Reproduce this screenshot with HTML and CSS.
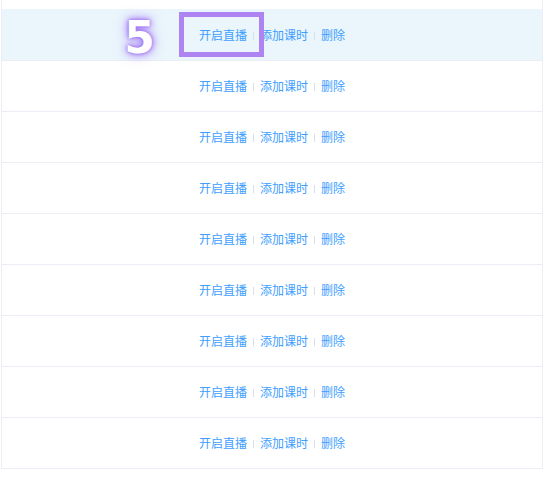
FILE: index.html
```html
<!DOCTYPE html>
<html lang="zh-CN">
<head>
<meta charset="utf-8">
<title>操作列表</title>
<link rel="stylesheet" href="styles.css">
</head>
<body>
<div class="table">
  <div class="row current">
    <div class="actions"><a class="link">开启直播</a><span class="divider"></span><a class="link">添加课时</a><span class="divider"></span><a class="link">删除</a></div>
  </div>
  <div class="row"><div class="actions"><a class="link">开启直播</a><span class="divider"></span><a class="link">添加课时</a><span class="divider"></span><a class="link">删除</a></div></div>
  <div class="row"><div class="actions"><a class="link">开启直播</a><span class="divider"></span><a class="link">添加课时</a><span class="divider"></span><a class="link">删除</a></div></div>
  <div class="row"><div class="actions"><a class="link">开启直播</a><span class="divider"></span><a class="link">添加课时</a><span class="divider"></span><a class="link">删除</a></div></div>
  <div class="row"><div class="actions"><a class="link">开启直播</a><span class="divider"></span><a class="link">添加课时</a><span class="divider"></span><a class="link">删除</a></div></div>
  <div class="row"><div class="actions"><a class="link">开启直播</a><span class="divider"></span><a class="link">添加课时</a><span class="divider"></span><a class="link">删除</a></div></div>
  <div class="row"><div class="actions"><a class="link">开启直播</a><span class="divider"></span><a class="link">添加课时</a><span class="divider"></span><a class="link">删除</a></div></div>
  <div class="row"><div class="actions"><a class="link">开启直播</a><span class="divider"></span><a class="link">添加课时</a><span class="divider"></span><a class="link">删除</a></div></div>
  <div class="row last"><div class="actions"><a class="link">开启直播</a><span class="divider"></span><a class="link">添加课时</a><span class="divider"></span><a class="link">删除</a></div></div>
</div>
<div class="step-number">5</div>
<div class="step-box"></div>
</body>
</html>
```
FILE: styles.css
```css
html, body {
  margin: 0;
  padding: 0;
  background: #ffffff;
}

body {
  font-family: "Noto Sans CJK SC", "Noto Sans", sans-serif;
  width: 543px;
  height: 479px;
  overflow: hidden;
  position: relative;
}

.table {
  margin-left: 1px;
  width: 542px;
  box-sizing: border-box;
  border-left: 1px solid #ebeef5;
  border-right: 1px solid #ebeef5;
  padding-top: 9px;
}

.row {
  height: 50px;
  border-top: 1px solid #ebeef5;
  display: flex;
  align-items: center;
  justify-content: center;
}

.row.current {
  background: #eaf5fc;
  border-top-color: #eaf5fc;
}

.row.last {
  border-bottom: 1px solid #ebeef5;
}

.actions {
  display: flex;
  align-items: center;
  font-size: 12px;
  line-height: 16px;
}

.link {
  color: #409eff;
  cursor: pointer;
  text-decoration: none;
}

.divider {
  display: inline-block;
  width: 1px;
  height: 8px;
  margin: 1px 6px 0;
  background: #dcdfe6;
}

.step-number {
  position: absolute;
  left: 119px;
  top: 16px;
  width: 41px;
  text-align: center;
  font-family: "DejaVu Sans", sans-serif;
  font-weight: bold;
  font-size: 44px;
  line-height: 44px;
  color: #ffffff;
  text-shadow: 0 0 3px #9c6cf3, 0 0 6px #a47af5, 0 0 10px rgba(165, 125, 245, 0.7), 0 0 14px rgba(180, 145, 250, 0.5);
}

.step-box {
  position: absolute;
  left: 179px;
  top: 12px;
  width: 85px;
  height: 45px;
  box-sizing: border-box;
  border: 5px solid #ae84f2;
}
```
